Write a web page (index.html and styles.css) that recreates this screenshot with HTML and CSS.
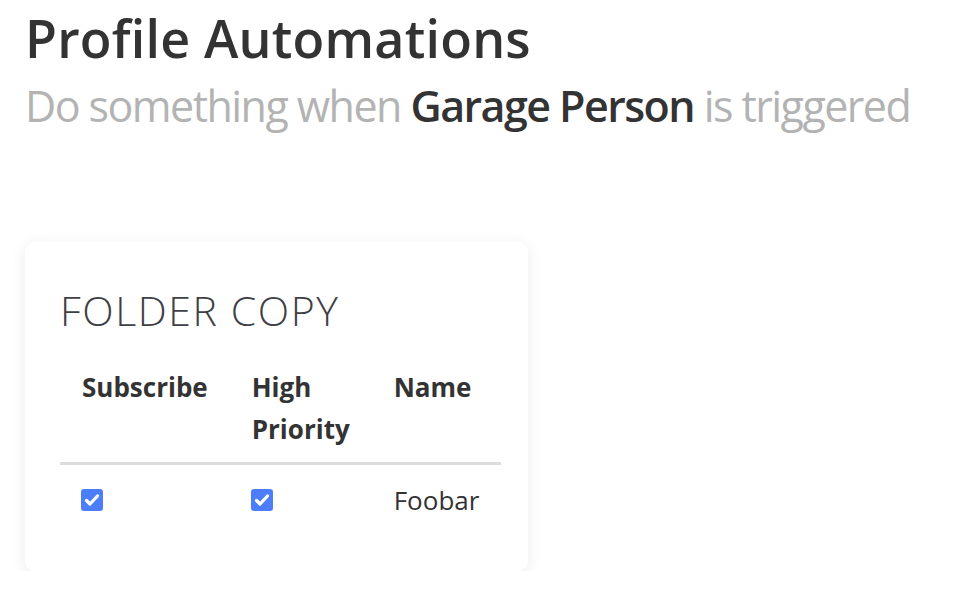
FILE: index.html
```html
<!DOCTYPE html>
<html>
<head>
<meta charset="utf-8">
<link rel="stylesheet" href="styles.css">
</head>
<body>
<div class="page">
  <header class="head">
    <h1 class="title">Profile Automations</h1>
    <p class="subtitle">Do something when <strong class="trigger">Garage Person</strong> is triggered</p>
  </header>
  <section class="card">
    <h2 class="card-title">FOLDER COPY</h2>
    <table class="rules">
      <thead>
        <tr>
          <th class="c1">Subscribe</th>
          <th class="c2">High Priority</th>
          <th class="c3">Name</th>
        </tr>
      </thead>
      <tbody>
        <tr>
          <td><span class="check"><svg viewBox="0 0 22 22" width="22" height="22"><path d="M5.5 11.5 L9 15 L16.5 7" fill="none" stroke="#fff" stroke-width="3.2" stroke-linecap="round" stroke-linejoin="round"/></svg></span></td>
          <td><span class="check"><svg viewBox="0 0 22 22" width="22" height="22"><path d="M5.5 11.5 L9 15 L16.5 7" fill="none" stroke="#fff" stroke-width="3.2" stroke-linecap="round" stroke-linejoin="round"/></svg></span></td>
          <td class="name">Foobar</td>
        </tr>
      </tbody>
    </table>
  </section>
</div>
</body>
</html>
```
FILE: styles.css
```css
html, body {
  margin: 0;
  padding: 0;
  background: #fff;
}
body {
  font-family: "Open Sans", "Noto Sans", sans-serif;
  color: #333;
}
.page {
  padding: 0 25px;
}
.head {
  padding-top: 6px;
}
.title {
  margin: 0;
  font-size: 52px;
  font-weight: 600;
  line-height: 64px;
  color: #333;
  letter-spacing: 0.2px;
}
.subtitle {
  margin: 10px 0 0;
  font-size: 43px;
  line-height: 52px;
  color: #b3b3b3;
  letter-spacing: -1.55px;
  white-space: nowrap;
}
.trigger {
  font-weight: 600;
  color: #333;
}
.card {
  margin-top: 110px;
  width: 433px;
  padding: 40px 35px 50px;
  background: #fff;
  border-radius: 10px;
  box-shadow: 0 3px 16px rgba(0,0,0,0.08);
}
.card-title {
  margin: 0 0 28px;
  font-size: 41px;
  font-weight: 300;
  line-height: 56px;
  color: #3f3f46;
  letter-spacing: 1.6px;
}
.rules {
  width: 440px;
  border-collapse: collapse;
}
.rules th {
  text-align: left;
  vertical-align: top;
  font-size: 26px;
  font-weight: 700;
  line-height: 42px;
  padding: 0 22px 12px;
  border-bottom: 3px solid #dcdcdc;
}
.c1 { width: 126px; }
.c2 { width: 97px; }
.rules td {
  padding: 14px 22px 0;
  vertical-align: middle;
  line-height: 42px;
}
.name {
  font-size: 26px;
  color: #333;
}
.check {
  display: block;
  width: 22px;
  height: 22px;
  border-radius: 3px;
  background: #4c7efc;
  margin-left: -1px;
}
.check svg {
  display: block;
}
```
